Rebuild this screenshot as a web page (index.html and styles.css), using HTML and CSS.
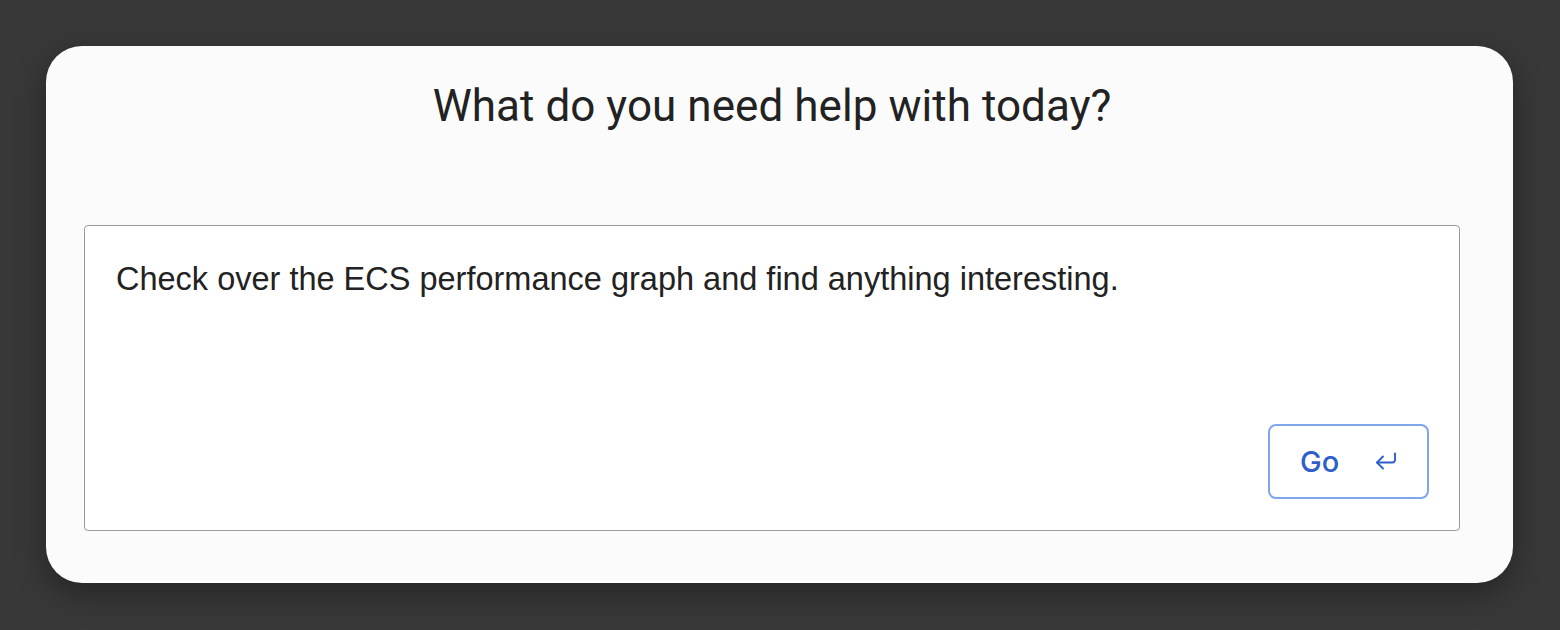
FILE: index.html
```html
<!DOCTYPE html>
<html>
<head>
<meta charset="utf-8">
<link rel="stylesheet" href="styles.css">
</head>
<body>
<div class="page">
  <div class="card">
    <h1 class="title">What do you need help with today?</h1>
    <div class="box">
      <p class="prompt">Check over the ECS performance graph and find anything interesting.</p>
      <div class="actions">
        <button class="go">
          <span class="go-label">Go</span>
          <svg class="go-icon" width="22" height="20" viewBox="0 0 22 20" fill="none" stroke="currentColor" stroke-width="1.9" stroke-linecap="round" stroke-linejoin="round">
            <path d="M20 1.5v6.5a2.5 2.5 0 0 1-2.5 2.5H2"/>
            <path d="M8 4.5l-6 6 6 6"/>
          </svg>
        </button>
      </div>
    </div>
  </div>
</div>
</body>
</html>
```
FILE: styles.css
```css
* { box-sizing: border-box; }
html, body {
  margin: 0;
  padding: 0;
  height: 100%;
}
body {
  background: #383838;
  font-family: Roboto, "Noto Sans", "Liberation Sans", sans-serif;
}
.page {
  padding: 46px 47px 0 46px;
}
.card {
  height: 537px;
  background: #fbfbfb;
  border-radius: 36px;
  box-shadow: 0 10px 30px rgba(0,0,0,0.35);
  padding: 0 53px 0 38px;
  display: flex;
  flex-direction: column;
}
.title {
  margin: 34px 0 0 0;
  text-align: center;
  font-size: 44px;
  font-weight: 400;
  line-height: 52px;
  color: #222;
  letter-spacing: 0.05px;
}
.box {
  margin-top: 93px;
  height: 306px;
  background: #fff;
  border: 1px solid #9a9a9a;
  border-radius: 4px;
  padding: 30px 30px 31px 31px;
  display: flex;
  flex-direction: column;
  justify-content: space-between;
}
.prompt {
  margin: 0;
  font-family: "Liberation Sans", Arial, sans-serif;
  font-size: 32.5px;
  line-height: 44px;
  color: #222;
  padding-top: 1px;
}
.actions {
  display: flex;
  justify-content: flex-end;
}
.go {
  width: 161px;
  height: 75px;
  background: #fff;
  border: 2px solid #7fa5eb;
  border-radius: 8px;
  color: #2e5ec9;
  display: flex;
  align-items: center;
  padding: 0 0 0 30px;
  font-family: Inter, "Noto Sans", "Liberation Sans", sans-serif;
  cursor: pointer;
}
.go-label {
  font-size: 29px;
  font-weight: 500;
}
.go-icon {
  margin-left: 36px;
  margin-top: 0px;
}
```
